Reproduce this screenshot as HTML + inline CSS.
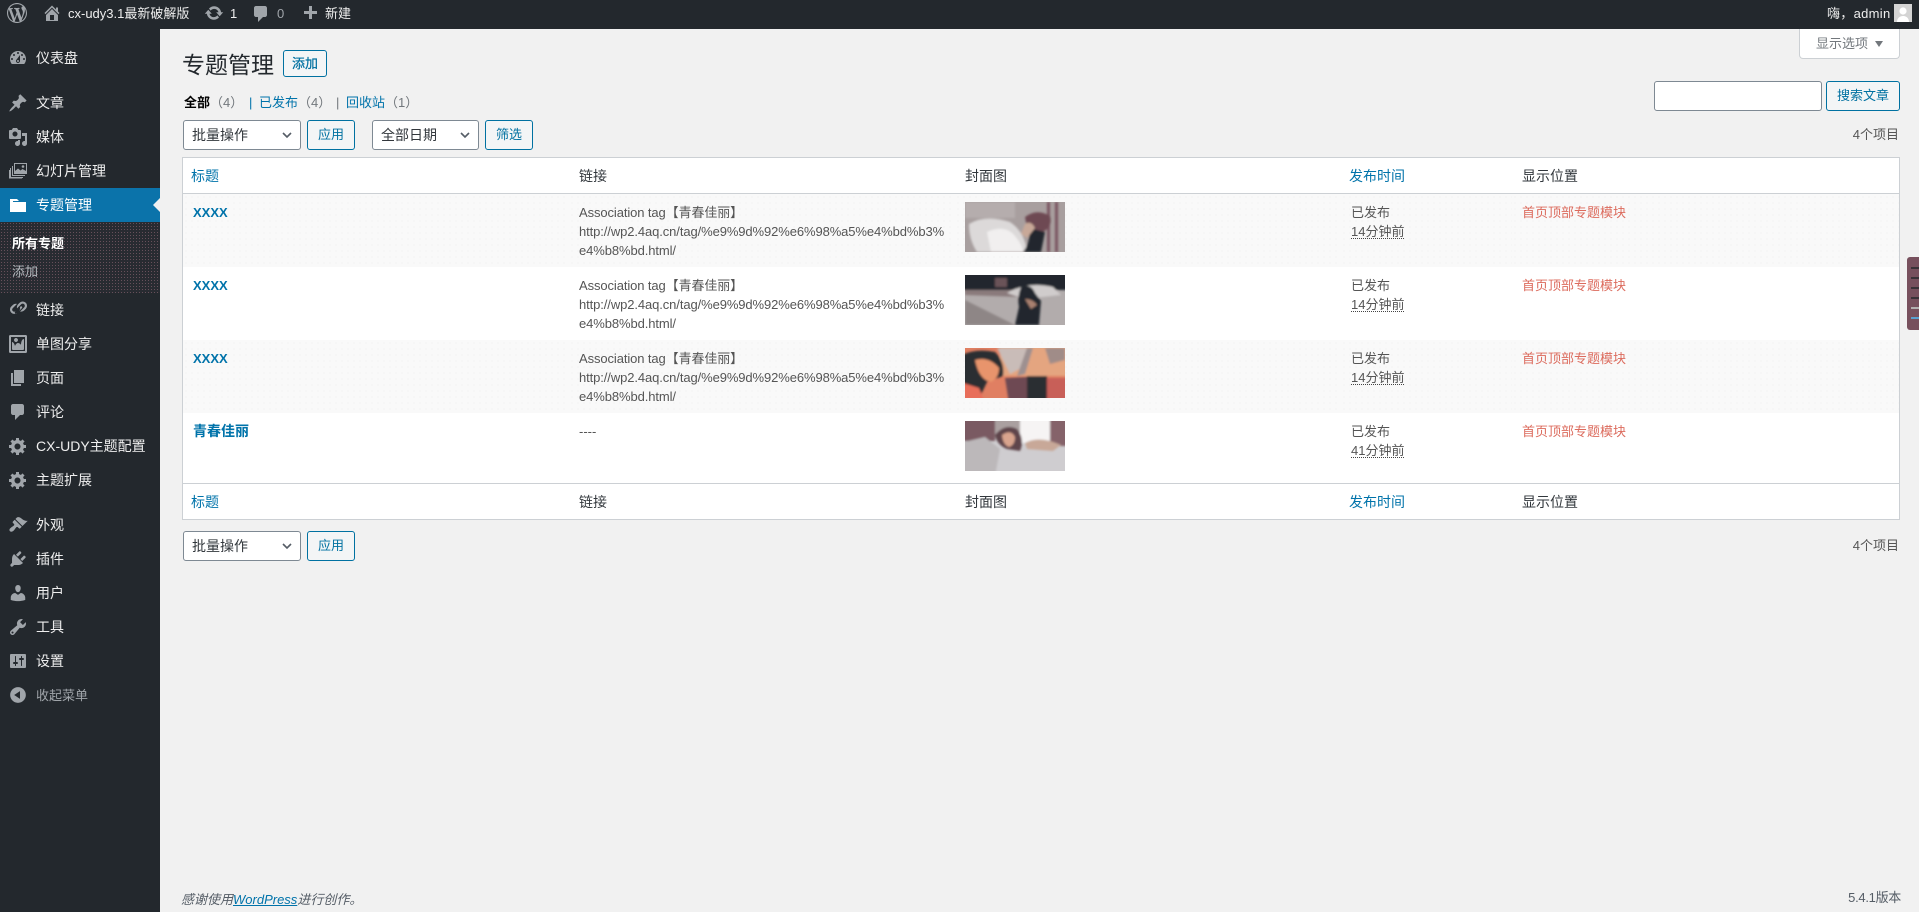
<!DOCTYPE html>
<html lang="zh-CN">
<head>
<meta charset="utf-8">
<title>专题管理</title>
<style>
*{box-sizing:border-box}
html,body{margin:0;padding:0;width:1919px;height:912px;overflow:hidden;background:#f1f1f1}
body{position:relative;font:13px/19px "Liberation Sans","Noto Sans CJK SC",sans-serif;color:#444}
a{text-decoration:none;color:#0073aa}
svg{display:block}
#bar{position:absolute;left:0;top:0;width:1919px;height:29px;background:#23282d;color:#eee;font-size:13px;line-height:27px}
#bar svg{position:absolute;fill:#a0a5aa}
#bar span{position:absolute;top:0;white-space:nowrap}
#side{position:absolute;left:0;top:29px;width:160px;height:883px;background:#23282d}
#side ul{list-style:none;margin:0;padding:0}
#menu{position:absolute;left:0;top:12px;width:160px}
#menu>li{position:relative;height:34px}
#menu>li>a{display:block;height:34px;padding-left:36px;line-height:35px;font-size:14px;color:#eee;white-space:nowrap}
#menu>li svg{position:absolute;left:8px;top:7px;width:20px;height:20px;fill:#a0a5aa}
#menu>li.sep{margin-top:11px}
#menu>li.cur{background:#0b73aa}
#menu>li.cur svg{fill:#fff}
#menu>li.cur>a{color:#fff}
#menu>li.cur:after{content:"";position:absolute;right:0;top:10px;border:7px solid transparent;border-right-color:#f1f1f1;border-left-width:0;border-right-width:7px}
#sub{height:71px;background-color:#282b31;background-image:radial-gradient(#67505a .65px,transparent .75px);background-size:3px 3px;position:relative}
#sub a{position:absolute;left:12px;font-size:13px;color:#b4b9be}
#sub a.on{color:#fff;font-weight:700}
#menu>li.col>a{color:#a0a5aa;font-size:13px}
h1{position:absolute;left:182px;top:48px;margin:0;font-size:23px;line-height:34px;font-weight:400;color:#23282d}
.btn{position:absolute;display:block;height:30px;border:1px solid #0071a1;border-radius:3px;background:#f3f5f6;color:#0071a1;font:13px/27px "Liberation Sans","Noto Sans CJK SC",sans-serif;text-align:center;padding:0}
.sel{position:absolute;height:30px;border:1px solid #7e8993;border-radius:3px;background:#fff;color:#32373c;font:14px/28px "Liberation Sans","Noto Sans CJK SC",sans-serif;padding:0 0 0 8px;white-space:nowrap}
.sel svg{position:absolute;right:8px;top:11px}
.t{position:absolute;white-space:nowrap}
#tab{position:absolute;left:1799px;top:29px;width:101px;height:30px;background:#fff;border:1px solid #ccd0d4;border-top:0;border-radius:0 0 4px 4px;color:#72777c;line-height:30px;padding-left:16px}
#tab i{position:absolute;left:75px;top:12px;border:4px solid transparent;border-top:6px solid #72777c;border-bottom:0}
table{position:absolute;left:182px;top:157px;width:1718px;border:1px solid #ccd0d4;border-collapse:separate;border-spacing:0;table-layout:fixed;background:#fff}
th{height:36px;font-weight:400;font-size:14px;text-align:left;padding:0 10px;color:#32373c;border-bottom:1px solid #ccd0d4;line-height:34px}
tfoot th{border-bottom:0;border-top:1px solid #ccd0d4;height:36px}
th.s{padding-left:8px}
th.s a{color:#0073aa}
td{vertical-align:top;padding:9px 10px 0;color:#555;line-height:19px;overflow:hidden}
td.im{padding-top:8px}
tbody tr{height:73px}
tbody tr.l{height:70px}
tbody tr.o td{background-color:#f9f9f9;background-image:radial-gradient(#efefef .6px,transparent .7px);background-size:6px 6px}
td.ti a{font-weight:700;font-size:13px;color:#0073aa}
td.ti a.cn{font-size:14px}
td.lk{letter-spacing:-.1px}
abbr{display:block;width:fit-content;border-bottom:1px dotted #444;line-height:12px;margin-top:4px}
.red{color:#dc6b5d}
.th{display:block;width:100px;height:50px}
#wid{position:absolute;left:1907px;top:257px;width:12px;height:73px;background:#77505d;border-radius:3px 0 0 3px}
#wid i{position:absolute;left:4px;width:8px;height:2px;background:#3a3238}
</style>
</head>
<body>
<svg width="0" height="0" style="position:absolute"><defs><filter id="b" x="-5%" y="-5%" width="110%" height="110%"><feGaussianBlur stdDeviation="1"/></filter></defs></svg>
<div id="bar">
<svg style="left:7px;top:3px" width="20" height="20" viewBox="0 0 20 20"><path d="M20 10c0-5.51-4.49-10-10-10C4.48 0 0 4.49 0 10c0 5.52 4.48 10 10 10 5.51 0 10-4.48 10-10zM7.78 15.37L4.37 6.22c.55-.02 1.17-.08 1.17-.08.5-.06.44-1.13-.06-1.11 0 0-1.45.11-2.37.11-.18 0-.37 0-.58-.01C4.12 2.69 6.87 1.11 10 1.11c2.33 0 4.45.87 6.05 2.34-.68-.11-1.65.39-1.65 1.58 0 .74.45 1.36.9 2.1.35.61.55 1.36.55 2.46 0 1.49-1.4 5-1.4 5l-3.03-8.37c.54-.02.82-.17.82-.17.5-.05.44-1.25-.06-1.22 0 0-1.44.12-2.38.12-.87 0-2.33-.12-2.33-.12-.5-.03-.56 1.2-.06 1.22l.92.08 1.26 3.41zM17.41 10c.24-.64.74-1.87.43-4.25.7 1.29 1.05 2.71 1.05 4.25 0 3.29-1.73 6.24-4.4 7.78.97-2.59 1.94-5.2 2.92-7.78zM6.1 18.09C3.12 16.65 1.11 13.53 1.11 10c0-1.3.23-2.48.72-3.59C3.25 10.3 4.67 14.2 6.1 18.09zm4.03-6.63l2.58 6.98c-.86.29-1.76.45-2.71.45-.79 0-1.57-.11-2.29-.33.81-2.38 1.62-4.74 2.42-7.1z"/></svg>
<svg style="left:42px;top:3px" width="20" height="20" viewBox="0 0 20 20"><path d="M16 8.5l1.53 1.53-1.06 1.06L10 4.62l-6.47 6.47-1.06-1.06L10 2.5l4 4v-2h2v4zm-6-2.46l6 5.99V18H4v-5.97zM12 17v-5H8v5h4z"/></svg>
<span style="left:68px">cx-udy3.1最新破解版</span>
<svg style="left:204px;top:3px" width="20" height="20" viewBox="0 0 20 20"><path d="M10.2 3.28c3.53 0 6.43 2.61 6.92 6h2.08l-3.5 4-3.5-4h2.32c-.45-1.97-2.21-3.45-4.32-3.45-1.45 0-2.73.71-3.54 1.78L4.95 5.66C6.23 4.2 8.11 3.28 10.2 3.28zm-.4 13.44c-3.52 0-6.43-2.61-6.92-6H.8l3.5-4c1.17 1.33 2.33 2.67 3.5 4H5.48c.45 1.97 2.21 3.45 4.32 3.45 1.45 0 2.73-.71 3.54-1.78l1.71 1.95c-1.28 1.46-3.15 2.38-5.25 2.38z"/></svg>
<span style="left:230px">1</span>
<svg style="left:251px;top:4px" width="20" height="20" viewBox="0 0 20 20"><path d="M5 2h9c1.100 0 2 .9 2 2v7c0 1.100-.9 2-2 2h-2l-5 5v-5H5c-1.100 0-2-.9-2-2V4c0-1.100.9-2 2-2z"/></svg>
<span style="left:277px;color:#a0a5aa">0</span>
<svg style="left:300px;top:4px" width="20" height="20" viewBox="0 0 20 20"><path d="M17 7v3h-5v5H9v-5H4V7h5V2h3v5h5z"/></svg>
<span style="left:325px">新建</span>
<span style="left:1827px;letter-spacing:.3px">嗨，admin</span>
<svg style="left:1894px;top:4px" width="18" height="18" viewBox="0 0 18 18"><rect width="18" height="18" style="fill:#d4d4d4"/><circle cx="9" cy="7" r="3.600" style="fill:#fff"/><path d="M3 18c0-4 3-6 6-6s6 2 6 6z" style="fill:#fff"/></svg>
</div>

<div id="side">
<ul id="menu">
<li><svg viewBox="0 0 20 20"><path d="M3.76 16h12.48c1.100-1.370 1.760-3.110 1.760-5 0-4.420-3.580-8-8-8s-8 3.580-8 8c0 1.890.66 3.630 1.760 5zM10 4c.55 0 1 .45 1 1s-.45 1-1 1-1-.45-1-1 .45-1 1-1zM6 6c.55 0 1 .45 1 1s-.45 1-1 1-1-.45-1-1 .45-1 1-1zm8 0c.55 0 1 .45 1 1s-.45 1-1 1-1-.45-1-1 .45-1 1-1zm-5.370 5.550L12 7v6c0 1.100-.9 2-2 2s-2-.9-2-2c0-.57.24-1.080.63-1.450zM4 10c.55 0 1 .45 1 1s-.45 1-1 1-1-.45-1-1 .45-1 1-1zm12 0c.55 0 1 .45 1 1s-.45 1-1 1-1-.45-1-1 .45-1 1-1zm-5 3c0-.55-.45-1-1-1s-1 .45-1 1 .45 1 1 1 1-.45 1-1z"/></svg><a href="#">仪表盘</a></li>
<li class="sep"><svg viewBox="0 0 20 20"><path d="M10.440 3.020l1.820-1.820 6.360 6.350-1.830 1.820c-1.050-.68-2.480-.57-3.410.36l-.75.75c-.92.93-1.040 2.350-.35 3.410l-1.830 1.820-2.410-2.410-2.800 2.790c-.42.42-3.380 2.710-3.800 2.290s1.860-3.390 2.280-3.810l2.790-2.790L4.100 9.360l1.830-1.820c1.050.69 2.480.57 3.400-.36l.75-.75c.93-.92 1.050-2.350.36-3.410z"/></svg><a href="#">文章</a></li>
<li><svg viewBox="0 0 20 20"><path d="M13 11V4c0-.55-.45-1-1-1h-1.670L9 1H5L3.670 3H2c-.55 0-1 .45-1 1v7c0 .55.45 1 1 1h10c.55 0 1-.45 1-1zM7 4.500c1.380 0 2.500 1.120 2.500 2.500S8.380 9.500 7 9.500 4.500 8.380 4.500 7 5.620 4.500 7 4.500zM14 6h5v10.500c0 1.380-1.120 2.500-2.500 2.500S14 17.880 14 16.500s1.120-2.500 2.500-2.500c.17 0 .34.02.5.05V9h-3V6zm-4 8.050V13h2v3.500c0 1.380-1.120 2.500-2.500 2.500S7 17.880 7 16.500 8.120 14 9.500 14c.17 0 .34.02.5.05z"/></svg><a href="#">媒体</a></li>
<li><svg viewBox="0 0 20 20"><path fill-rule="evenodd" d="M6 2h13v11H6zM7 3v7l3-2.500 2.500 2 2-1.500L18 10V3zM4 5h1v9h12v1H4zM2 7h1v9h12v1H2zM1 9h1v9h12v-.5H1z"/><circle cx="15" cy="5.500" r="1.300"/></svg><a href="#">幻灯片管理</a></li>
<li class="cur"><svg viewBox="0 0 20 20"><path d="M5 7h13v10H2V4h7l2 2H5v1z"/></svg><a href="#">专题管理</a></li>
<li style="height:71px"><div id="sub"><a class="on" href="#" style="top:12px">所有专题</a><a href="#" style="top:40px">添加</a></div></li>
<li><svg viewBox="0 0 20 20"><path d="M17.740 2.760c1.680 1.690 1.680 4.410 0 6.100l-1.530 1.520c-1.120 1.120-2.700 1.470-4.140 1.090l2.620-2.610.76-.77.76-.76c.84-.84.84-2.200 0-3.040-.84-.85-2.200-.85-3.040 0l-.77.76-3.380 3.380c-.37-1.440-.02-3.020 1.100-4.140l1.520-1.530c1.690-1.680 4.420-1.680 6.100 0zM8.590 13.430l5.340-5.340c.42-.42.42-1.100 0-1.520-.44-.43-1.130-.39-1.530 0l-5.330 5.340c-.42.42-.42 1.100 0 1.520.44.43 1.130.39 1.520 0zm-.76-2.290l4.140-4.150c.38 1.440.03 3.020-1.090 4.140l-1.520 1.530c-1.690 1.680-4.410 1.680-6.100 0-1.680-1.680-1.680-4.420 0-6.100l1.530-1.520c1.120-1.120 2.700-1.470 4.140-1.100l-4.140 4.150c-.85.84-.85 2.200 0 3.050.84.84 2.200.84 3.040 0z"/></svg><a href="#">链接</a></li>
<li><svg viewBox="0 0 20 20"><path d="M2.250 1h15.500c.69 0 1.250.56 1.250 1.250v15.500c0 .69-.56 1.250-1.250 1.250H2.250C1.560 19 1 18.440 1 17.750V2.250C1 1.560 1.560 1 2.250 1zM17 17V3H3v14h14zM10 6c0-1.100-.9-2-2-2s-2 .9-2 2 .9 2 2 2 2-.9 2-2zm3 5s0-6 3-6v10c0 .55-.45 1-1 1H5c-.55 0-1-.45-1-1V8c2 0 3 4 3 4s1-3 3-3 3 2 3 2z"/></svg><a href="#">单图分享</a></li>
<li><svg viewBox="0 0 20 20"><path d="M6 15V2h10v13H6zm-1 1h8v2H3V5h2v11z"/></svg><a href="#">页面</a></li>
<li><svg viewBox="0 0 20 20"><path d="M5 2h9c1.100 0 2 .9 2 2v7c0 1.100-.9 2-2 2h-2l-5 5v-5H5c-1.100 0-2-.9-2-2V4c0-1.100.9-2 2-2z"/></svg><a href="#">评论</a></li>
<li><svg viewBox="0 0 20 20"><path d="M18 12h-2.180c-.17.7-.44 1.350-.81 1.930l1.540 1.540-2.100 2.100-1.540-1.540c-.58.36-1.230.63-1.910.79V19H8v-2.180c-.68-.16-1.330-.43-1.910-.79l-1.540 1.540-2.120-2.120 1.540-1.540c-.36-.58-.63-1.230-.79-1.910H1V9.030h2.170c.16-.7.44-1.350.8-1.940L2.430 5.550l2.100-2.100 1.540 1.540c.58-.37 1.240-.64 1.930-.81V2h3v2.180c.68.16 1.330.43 1.910.79l1.540-1.540 2.120 2.120-1.540 1.540c.36.59.64 1.240.8 1.940H18V12zm-8.500 1.500c1.660 0 3-1.340 3-3s-1.340-3-3-3-3 1.340-3 3 1.340 3 3 3z"/></svg><a href="#">CX-UDY主题配置</a></li>
<li><svg viewBox="0 0 20 20"><path d="M18 12h-2.180c-.17.7-.44 1.350-.81 1.930l1.540 1.540-2.100 2.100-1.540-1.540c-.58.36-1.230.63-1.910.79V19H8v-2.180c-.68-.16-1.330-.43-1.910-.79l-1.540 1.540-2.120-2.120 1.540-1.540c-.36-.58-.63-1.230-.79-1.910H1V9.030h2.170c.16-.7.44-1.350.8-1.940L2.430 5.550l2.100-2.100 1.540 1.540c.58-.37 1.240-.64 1.930-.81V2h3v2.180c.68.16 1.330.43 1.910.79l1.540-1.540 2.120 2.120-1.540 1.540c.36.59.64 1.240.8 1.940H18V12zm-8.500 1.500c1.660 0 3-1.340 3-3s-1.340-3-3-3-3 1.340-3 3 1.340 3 3 3z"/></svg><a href="#">主题扩展</a></li>
<li class="sep"><svg viewBox="0 0 20 20"><path d="M14.480 11.060L7.410 3.990l1.500-1.500c.5-.56 2.300-.47 3.510.32 1.210.8 1.430 1.280 2.910 2.100 1.180.64 2.450 1.260 4.450.85zm-.71.71L6.700 4.700 4.930 6.470c-.39.39-.39 1.020 0 1.410l1.060 1.060c.39.39.39 1.030 0 1.420-.6.6-1.430 1.110-2.210 1.690-.35.26-.7.53-1.010.84C1.430 13.710.96 15.180 2 16.200c1.040 1.020 2.500.56 3.870-.81.31-.31.58-.66.84-1.010.58-.78 1.090-1.610 1.690-2.210.39-.39 1.030-.39 1.420 0l1.060 1.060c.39.39 1.020.39 1.410 0z"/></svg><a href="#">外观</a></li>
<li><svg viewBox="0 0 20 20"><path d="M13.110 4.360L9.870 7.600 8 5.730l3.240-3.240c.35-.34 1.050-.2 1.560.32.52.51.66 1.210.31 1.550zm-8 1.770l.91-1.120 9.010 9.010-1.190.84c-.71.71-2.630 1.160-3.820 1.160H6.140L4.900 17.260c-.59.59-1.540.59-2.120 0-.59-.58-.59-1.530 0-2.120l1.240-1.240v-3.880c0-1.130.4-3.190 1.090-3.890zm7.260 3.970l3.240-3.240c.34-.35 1.040-.21 1.550.31.52.51.66 1.210.31 1.550l-3.240 3.250z"/></svg><a href="#">插件</a></li>
<li><svg viewBox="0 0 20 20"><path d="M10 9.250c-2.270 0-2.730-3.440-2.730-3.440C7 4.020 7.820 2 9.970 2c2.160 0 2.980 2.020 2.710 3.810 0 0-.41 3.440-2.680 3.440zm0 2.570L12.720 10c2.390 0 4.520 2.330 4.520 4.530v2.490s-3.650 1.130-7.240 1.130c-3.650 0-7.240-1.130-7.240-1.130v-2.490c0-2.250 1.940-4.480 4.470-4.480z"/></svg><a href="#">用户</a></li>
<li><svg viewBox="0 0 20 20"><path d="M16.680 9.770c-1.340 1.340-3.300 1.670-4.950.99l-5.410 6.520c-.99.99-2.590.99-3.580 0s-.99-2.590 0-3.570l6.520-5.420c-.68-1.650-.35-3.610.99-4.950 1.280-1.280 3.120-1.620 4.720-1.060l-2.890 2.890 2.820 2.820 2.860-2.870c.53 1.580.18 3.390-1.080 4.650zM3.810 16.210c.4.39 1.040.39 1.430 0 .4-.4.4-1.040 0-1.430-.39-.4-1.030-.4-1.430 0-.39.39-.39 1.030 0 1.430z"/></svg><a href="#">工具</a></li>
<li><svg viewBox="0 0 20 20"><path d="M18 16V4c0-.55-.45-1-1-1H3c-.55 0-1 .45-1 1v12c0 .55.45 1 1 1h14c.55 0 1-.45 1-1zM8 11h1c.55 0 1 .45 1 1s-.45 1-1 1H8v1.500c0 .28-.22.5-.5.5s-.5-.22-.5-.5V13H6c-.55 0-1-.45-1-1s.45-1 1-1h1V5.500c0-.28.22-.5.5-.5s.5.22.5.5V11zm5-2h-1c-.55 0-1-.45-1-1s.45-1 1-1h1V5.500c0-.28.22-.5.5-.5s.5.22.5.5V7h1c.55 0 1 .45 1 1s-.45 1-1 1h-1v5.500c0 .28-.22.5-.5.5s-.5-.22-.5-.5V9z"/></svg><a href="#">设置</a></li>
<li class="col"><svg viewBox="0 0 20 20"><path d="M10 2.160c4.330 0 7.840 3.510 7.840 7.840s-3.510 7.840-7.840 7.840S2.160 14.330 2.160 10 5.710 2.160 10 2.160zm2 11.720V6.120L6.180 9.970z"/></svg><a href="#">收起菜单</a></li>
</ul>
</div>

<div id="tab">显示选项<i></i></div>
<h1>专题管理</h1>
<a class="btn" href="#" style="left:283px;top:50px;width:44px;height:27px;line-height:25px;-webkit-text-stroke:.25px #0071a1">添加</a>

<div class="t" style="left:184px;top:93px;color:#000;font-weight:700">全部</div>
<div class="t" style="left:210px;top:93px;color:#72777c">（4）</div>
<div class="t" style="left:249px;top:93px;color:#0073aa">|</div>
<a class="t" href="#" style="left:259px;top:93px">已发布</a>
<div class="t" style="left:298px;top:93px;color:#72777c">（4）</div>
<div class="t" style="left:336px;top:93px;color:#72777c">|</div>
<a class="t" href="#" style="left:346px;top:93px">回收站</a>
<div class="t" style="left:385px;top:93px;color:#72777c">（1）</div>

<div style="position:absolute;left:1654px;top:81px;width:168px;height:30px;background:#fff;border:1px solid #7e8993;border-radius:3px"></div>
<a class="btn" href="#" style="left:1826px;top:81px;width:74px">搜索文章</a>

<div class="sel" style="left:183px;top:120px;width:118px">批量操作<svg width="10" height="7" viewBox="0 0 10 7"><path d="M1 1l4 4 4-4" fill="none" stroke="#555d66" stroke-width="1.600"/></svg></div>
<a class="btn" href="#" style="left:307px;top:120px;width:48px">应用</a>
<div class="sel" style="left:372px;top:120px;width:107px">全部日期<svg width="10" height="7" viewBox="0 0 10 7"><path d="M1 1l4 4 4-4" fill="none" stroke="#555d66" stroke-width="1.600"/></svg></div>
<a class="btn" href="#" style="left:485px;top:120px;width:48px">筛选</a>
<div class="t" style="right:20px;top:125px;color:#555">4个项目</div>

<table>
<colgroup><col style="width:386px"><col style="width:386px"><col style="width:386px"><col style="width:171px"><col style="width:387px"></colgroup>
<thead><tr><th class="s"><a href="#">标题</a></th><th>链接</th><th>封面图</th><th class="s"><a href="#">发布时间</a></th><th>显示位置</th></tr></thead>
<tbody>
<tr class="o"><td class="ti"><a href="#">XXXX</a></td><td class="lk">Association tag【青春佳丽】<br>http://wp2.4aq.cn/tag/%e9%9d%92%e6%98%a5%e4%bd%b3%<br>e4%b8%bd.html/</td>
<td class="im"><svg class="th" viewBox="0 0 100 50" preserveAspectRatio="none"><rect width="100" height="50" fill="#a89f9f"/><g filter="url(#b)"><rect x="0" y="0" width="50" height="16" fill="#b5adad"/><path d="M4 22Q20 12 45 20Q60 30 62 50H12Q4 38 4 22z" fill="#dcd9d9"/><path d="M22 30Q40 22 50 34Q58 44 58 50H26z" fill="#f1efef"/><rect x="82" y="0" width="3" height="50" fill="#7a5560"/><rect x="90" y="0" width="3" height="50" fill="#7a5560"/><path d="M60 15Q72 6 85 14Q88 24 78 30L62 26z" fill="#6e4a52"/><path d="M64 26L80 30L76 50H58Q66 40 64 26z" fill="#23282d"/><path d="M60 22Q66 18 70 26L62 36L56 32z" fill="#c8a898"/></g></svg></td>
<td>已发布<abbr>14分钟前</abbr></td><td class="red">首页顶部专题模块</td></tr>
<tr><td class="ti"><a href="#">XXXX</a></td><td class="lk">Association tag【青春佳丽】<br>http://wp2.4aq.cn/tag/%e9%9d%92%e6%98%a5%e4%bd%b3%<br>e4%b8%bd.html/</td>
<td class="im"><svg class="th" viewBox="0 0 100 50" preserveAspectRatio="none"><rect width="100" height="50" fill="#b2acac"/><g filter="url(#b)"><rect x="-5" y="-5" width="110" height="20" fill="#23282d"/><path d="M0 15H55V22L0 20z" fill="#8a7a7c"/><path d="M42 18Q62 6 88 12L96 20L60 24z" fill="#d0cccc"/><rect x="30" y="3" width="12" height="9" fill="#6b5358"/><path d="M0 25L50 50H0z" fill="#8e8686"/><path d="M56 12Q66 8 70 18L76 26L74 50H50L54 32Q52 22 56 12z" fill="#23282d"/><path d="M60 24Q68 24 72 30L66 34z" fill="#a88070"/></g></svg></td>
<td>已发布<abbr>14分钟前</abbr></td><td class="red">首页顶部专题模块</td></tr>
<tr class="o"><td class="ti"><a href="#">XXXX</a></td><td class="lk">Association tag【青春佳丽】<br>http://wp2.4aq.cn/tag/%e9%9d%92%e6%98%a5%e4%bd%b3%<br>e4%b8%bd.html/</td>
<td class="im"><svg class="th" viewBox="0 0 100 50" preserveAspectRatio="none"><rect width="100" height="50" fill="#e07f62"/><g filter="url(#b)"><rect x="35" y="-5" width="70" height="33" fill="#e4a580"/><path d="M32 0H62L60 18L45 26z" fill="#c9bcb8"/><path d="M62 0H68L60 26L52 28z" fill="#9e9090"/><path d="M80 0H100V12L85 16z" fill="#a08c88"/><path d="M-5 8Q10 0 30 4Q40 14 38 28L22 34L12 55H-5z" fill="#2a2d33"/><path d="M10 12Q24 8 34 20Q34 30 26 34Q14 32 10 12z" fill="#e8946c"/><path d="M40 30L78 28L82 55H44z" fill="#6e4a52"/><path d="M62 28H82V55H62z" fill="#2a2d33"/><path d="M82 30H105V55H82z" fill="#c85f58"/><path d="M-5 34L14 40L20 55H-5z" fill="#e86e5a"/></g></svg></td>
<td>已发布<abbr>14分钟前</abbr></td><td class="red">首页顶部专题模块</td></tr>
<tr class="l"><td class="ti"><a class="cn" href="#">青春佳丽</a></td><td>----</td>
<td class="im"><svg class="th" viewBox="0 0 100 50" preserveAspectRatio="none"><rect width="100" height="50" fill="#cfcdd0"/><g filter="url(#b)"><rect x="-5" y="-5" width="35" height="25" fill="#7a5a62"/><rect x="30" y="-5" width="25" height="23" fill="#aaa0a0"/><rect x="55" y="-5" width="30" height="27" fill="#f6f4f4"/><rect x="85" y="-5" width="20" height="30" fill="#85636b"/><path d="M-5 22L20 16L35 28L30 55H-5z" fill="#bcb8ba"/><path d="M30 14Q40 2 52 8Q60 18 55 30L42 28Q32 24 30 14z" fill="#5f444c"/><path d="M37 14Q46 8 50 16Q50 24 44 26Q38 24 37 14z" fill="#d9a48e"/><path d="M60 22Q74 14 96 24L88 30L62 28z" fill="#c8a898"/></g></svg></td>
<td>已发布<abbr>41分钟前</abbr></td><td class="red">首页顶部专题模块</td></tr>
</tbody>
<tfoot><tr><th class="s"><a href="#">标题</a></th><th>链接</th><th>封面图</th><th class="s"><a href="#">发布时间</a></th><th>显示位置</th></tr></tfoot>
</table>

<div class="sel" style="left:183px;top:531px;width:118px">批量操作<svg width="10" height="7" viewBox="0 0 10 7"><path d="M1 1l4 4 4-4" fill="none" stroke="#555d66" stroke-width="1.600"/></svg></div>
<a class="btn" href="#" style="left:307px;top:531px;width:48px">应用</a>
<div class="t" style="right:20px;top:536px;color:#555">4个项目</div>

<div class="t" style="left:181px;top:890px;font-style:italic;color:#555d66">感谢使用<a href="#" style="text-decoration:underline">WordPress</a>进行创作。</div>
<div class="t" style="right:18px;top:888px;color:#555d66;letter-spacing:-.3px">5.4.1版本</div>

<div id="wid"><i style="top:10px"></i><i style="top:20px"></i><i style="top:30px"></i><i style="top:40px"></i><i style="top:50px;background:#b4b0b0"></i><i style="top:60px;background:#5aa0d0"></i></div>
</body>
</html>
